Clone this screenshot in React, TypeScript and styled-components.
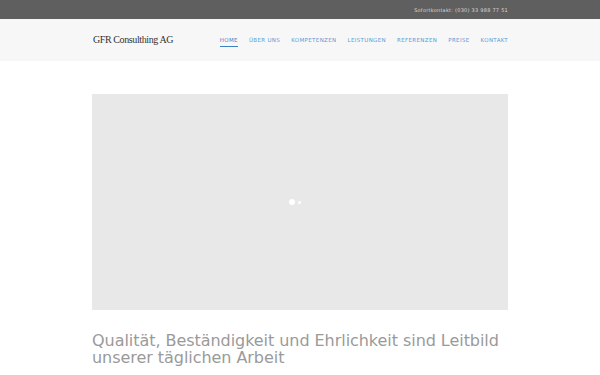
import React from 'react'
import styled, { createGlobalStyle } from 'styled-components'

const GlobalStyle = createGlobalStyle`
  html, body {
    margin: 0;
    padding: 0;
    background: #ffffff;
    font-family: "DejaVu Sans", sans-serif;
  }
`

const navItems = ['Home', 'Über uns', 'Kompetenzen', 'Leistungen', 'Referenzen', 'Preise', 'Kontakt']

const App: React.FC = () => {
    return (
        <>
            <GlobalStyle />
            <TopBar>
                <Container>
                    <TopBarText>Sofortkontakt: (030) 33 988 77 51</TopBarText>
                </Container>
            </TopBar>
            <Header>
                <HeaderInner>
                    <Logo>GFR Consulthing AG</Logo>
                    <Nav>
                        {navItems.map((item, i) => (
                            <NavLink key={item} $active={i === 0}>{item}</NavLink>
                        ))}
                    </Nav>
                </HeaderInner>
            </Header>
            <Main>
                <Container>
                    <Slider>
                        <Loader>
                            <Dot $size={6} />
                            <Dot $size={3} />
                        </Loader>
                    </Slider>
                    <Headline>
                        Qualität, Beständigkeit und Ehrlichkeit sind Leitbild unserer täglichen Arbeit
                    </Headline>
                </Container>
            </Main>
        </>
    )
}

export default App

const Container = styled.div`
  width: 416px;
  margin: 0 auto;
`

const TopBar = styled.div`
  background: #5f5f5f;
  height: 19px;
  display: flex;
  align-items: center;
`

const TopBarText = styled.div`
  text-align: right;
  color: #d8d8d8;
  font-family: "DejaVu Sans", sans-serif;
  font-size: 5px;
  letter-spacing: 0.25px;
`

const Header = styled.header`
  background: #f7f7f7;
  height: 42px;
  display: flex;
  align-items: center;
`

const HeaderInner = styled(Container)`
  display: flex;
  align-items: center;
  justify-content: space-between;
`

const Logo = styled.div`
  font-family: "Liberation Serif", serif;
  font-size: 10px;
  color: #333333;
  letter-spacing: -0.4px;
  padding-left: 1px;
  margin-top: -2px;
`

const Nav = styled.nav`
  display: flex;
  gap: 11px;
`

const NavLink = styled.a<{ $active?: boolean }>`
  font-family: "DejaVu Sans", sans-serif;
  font-size: 5.5px;
  font-weight: 400;
  letter-spacing: 0.35px;
  text-transform: uppercase;
  color: ${p => (p.$active ? '#3b82c4' : '#5b9bd5')};
  padding-bottom: 3px;
  border-bottom: 1px solid ${p => (p.$active ? '#3b82c4' : 'transparent')};
  margin-top: 3px;
`

const Main = styled.main`
  padding-top: 33px;
`

const Slider = styled.div`
  height: 216px;
  background: #e8e8e8;
  display: flex;
  align-items: center;
  justify-content: center;
`

const Loader = styled.div`
  display: flex;
  align-items: center;
  gap: 3px;
  margin-right: 10px;
`

const Dot = styled.span<{ $size: number }>`
  width: ${p => p.$size}px;
  height: ${p => p.$size}px;
  border-radius: 50%;
  background: #ffffff;
`

const Headline = styled.h1`
  margin: 22px 0 0;
  font-family: "DejaVu Sans", sans-serif;
  font-weight: 400;
  font-size: 16px;
  line-height: 17px;
  letter-spacing: -0.05px;
  color: #9a9a9a;
`
